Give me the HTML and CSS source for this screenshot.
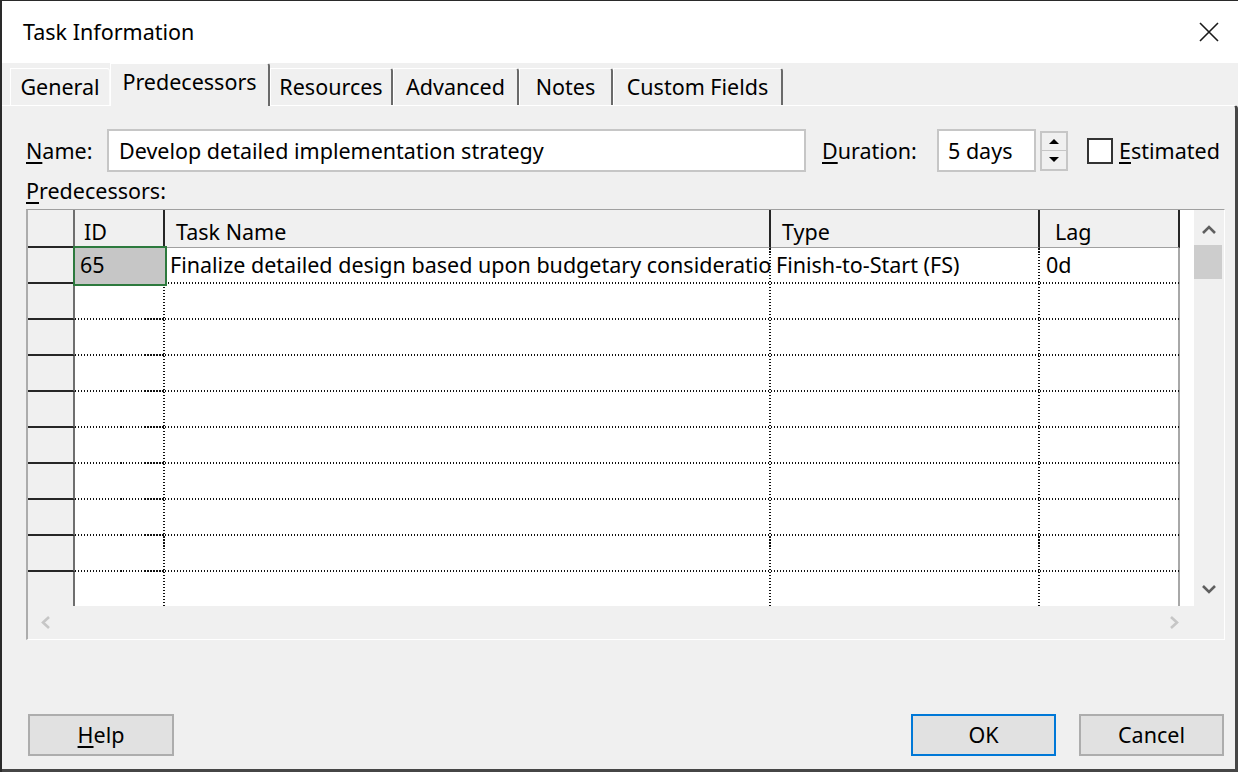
FILE: index.html
```html
<!DOCTYPE html>
<html lang="en">
<head>
<meta charset="utf-8">
<title>Task Information</title>
<link rel="stylesheet" href="styles.css">
</head>
<body>
<div class="window">
  <header class="titlebar">
    <span class="title">Task Information</span>
    <svg class="close" width="20" height="20" viewBox="0 0 20 20" aria-label="Close">
      <path d="M1 1 L19 19 M19 1 L1 19" stroke="#1a1a1a" stroke-width="1.6" fill="none"/>
    </svg>
  </header>

  <nav class="tabs">
    <div class="tab tab-general">General</div>
    <div class="tab tab-pred active">Predecessors</div>
    <div class="tab tab-res">Resources</div>
    <div class="tab tab-adv">Advanced</div>
    <div class="tab tab-notes">Notes</div>
    <div class="tab tab-custom">Custom Fields</div>
  </nav>

  <div class="panel">
    <section class="page">
      <div class="name-row">
        <span class="lbl lbl-name"><u>N</u>ame:</span>
        <div class="field field-name">Develop detailed implementation strategy</div>
        <span class="lbl lbl-dur"><u>D</u>uration:</span>
        <div class="field field-dur">5 days</div>
        <div class="spin">
          <span class="spin-btn spin-up"><i class="tri-up"></i></span>
          <span class="spin-btn"><i class="tri-down"></i></span>
        </div>
        <span class="check"></span>
        <span class="lbl lbl-est"><u>E</u>stimated</span>
      </div>

      <div class="pred-label"><u>P</u>redecessors:</div>

      <div class="gridbox">
        <div class="grid-main">
          <div class="sheet">
            <div class="hc rh"></div>
            <div class="hc h-id">ID</div>
            <div class="hc">Task Name</div>
            <div class="hc">Type</div>
            <div class="hc h-lag">Lag</div>

            <div class="rh"></div>
            <div class="c sel">65</div>
            <div class="c">Finalize detailed design based upon budgetary considerations</div>
            <div class="c">Finish-to-Start (FS)</div>
            <div class="c lag">0d</div>

            <div class="rh"></div><div class="c"></div><div class="c"></div><div class="c"></div><div class="c lag"></div>
            <div class="rh"></div><div class="c"></div><div class="c"></div><div class="c"></div><div class="c lag"></div>
            <div class="rh"></div><div class="c"></div><div class="c"></div><div class="c"></div><div class="c lag"></div>
            <div class="rh"></div><div class="c"></div><div class="c"></div><div class="c"></div><div class="c lag"></div>
            <div class="rh"></div><div class="c"></div><div class="c"></div><div class="c"></div><div class="c lag"></div>
            <div class="rh"></div><div class="c"></div><div class="c"></div><div class="c"></div><div class="c lag"></div>
            <div class="rh"></div><div class="c"></div><div class="c"></div><div class="c"></div><div class="c lag"></div>
            <div class="rh"></div><div class="c"></div><div class="c"></div><div class="c"></div><div class="c lag"></div>
            <div class="rh"></div><div class="c"></div><div class="c"></div><div class="c"></div><div class="c lag"></div>
          </div>
          <div class="vscroll">
            <div class="vs-arrow vs-up">
              <svg width="16" height="12" viewBox="0 0 16 12"><path d="M2 10 L8 4 L14 10" fill="none" stroke="#5f5f5f" stroke-width="2.6"/></svg>
            </div>
            <div class="vs-thumb"></div>
            <div class="vs-track"></div>
            <div class="vs-arrow vs-down">
              <svg width="16" height="12" viewBox="0 0 16 12"><path d="M2 2 L8 8 L14 2" fill="none" stroke="#5f5f5f" stroke-width="2.6"/></svg>
            </div>
          </div>
        </div>
        <div class="hscroll">
          <svg width="13" height="15" viewBox="0 0 13 15"><path d="M10 2 L4 7.5 L10 13" fill="none" stroke="#c6c6c6" stroke-width="2.6"/></svg>
          <svg width="13" height="15" viewBox="0 0 13 15"><path d="M3 2 L9 7.5 L3 13" fill="none" stroke="#c6c6c6" stroke-width="2.6"/></svg>
        </div>
      </div>
    </section>

    <footer class="buttons">
      <button class="btn btn-help"><u>H</u>elp</button>
      <span class="spacer"></span>
      <button class="btn btn-ok">OK</button>
      <button class="btn btn-cancel">Cancel</button>
    </footer>
  </div>
</div>
</body>
</html>
```

FILE: styles.css
```css
* {
  box-sizing: border-box;
}

html,
body {
  margin: 0;
  padding: 0;
}

body {
  background: #fff;
  font-family: "Noto Sans", "Segoe UI", sans-serif;
  font-size: 21.5px;
  color: #000;
}

u {
  text-decoration-thickness: 1.5px;
  text-underline-offset: 3px;
}

/* window frame */
.window {
  width: 1238px;
  height: 772px;
  display: flex;
  flex-direction: column;
  background: #f0f0f0;
  border-top: 1px solid #2a2a2a;
  border-left: 2px solid #2a2a2a;
}

.titlebar {
  flex: none;
  height: 62px;
  display: flex;
  align-items: center;
  padding: 0 19px 0 21px;
  background: #fff;
}

.title {
  flex: 1;
  line-height: 28px;
}

.close {
  display: block;
}

/* tab strip */
.tabs {
  flex: none;
  height: 42px;
  display: flex;
  align-items: flex-end;
  padding-left: 8px;
}

.tab {
  height: 37px;
  padding-top: 4px;
  line-height: 28px;
  text-align: center;
  white-space: nowrap;
  background: #f0f0f0;
  border-top: 1px solid #fff;
  border-left: 1px solid #fff;
  border-right: 2px solid #6a6a6a;
  border-top-right-radius: 3px;
}

.tab.active {
  height: 43px;
  margin-bottom: -1px;
  position: relative;
  z-index: 1;
}

.tab-general {
  width: 100px;
  border-right: 1px solid #fbfbfb;
}

.tab-pred { width: 160px; }
.tab-res { width: 123px; }
.tab-adv { width: 126px; }
.tab-notes { width: 94px; }
.tab-custom { width: 170px; }

/* tab page */
.panel {
  flex: 1;
  display: flex;
  flex-direction: column;
  border-top: 1px solid #fff;
  border-right: 3px solid #464646;
  border-bottom: 3px solid #464646;
  border-top-right-radius: 4px;
}

.page {
  padding: 23px 0 0 24px;
}

.name-row {
  height: 43px;
  display: flex;
  align-items: center;
}

.lbl {
  line-height: 28px;
  white-space: nowrap;
}

.lbl-name { width: 81px; }

.lbl-dur {
  width: 115px;
  margin-left: 16px;
}

.lbl-est { margin-left: 6px; }

.field {
  height: 43px;
  padding-left: 10px;
  line-height: 39px;
  white-space: nowrap;
  overflow: hidden;
  background: #fff;
  border: 2px solid #c6c6c6;
}

.field-name { width: 699px; }

.field-dur {
  width: 99px;
  padding-left: 9px;
}

.spin {
  width: 28px;
  height: 40px;
  margin-left: 4px;
  display: flex;
  flex-direction: column;
  background: #f0f0f0;
  border: 2px solid #c6c6c6;
}

.spin-btn {
  flex: 1;
  display: flex;
  align-items: center;
  justify-content: center;
}

.spin-up {
  border-bottom: 1px solid #c6c6c6;
}

.tri-up,
.tri-down {
  width: 0;
  height: 0;
  border-left: 5px solid transparent;
  border-right: 5px solid transparent;
}

.tri-up { border-bottom: 5px solid #000; }
.tri-down { border-top: 5px solid #000; }

.check {
  width: 26px;
  height: 26px;
  margin-left: 19px;
  background: #fff;
  border: 2px solid #333;
}

.pred-label {
  height: 37px;
  padding-top: 5px;
  line-height: 28px;
}

/* predecessor sheet */
.gridbox {
  width: 1199px;
  height: 431px;
  display: flex;
  flex-direction: column;
  border-top: 1px solid #a0a0a0;
  border-left: 2px solid #acacac;
  border-right: 1px solid #fff;
  border-bottom: 1px solid #fff;
}

.grid-main {
  height: 396px;
  display: flex;
}

.sheet {
  flex: 1;
  overflow: hidden;
  background: #fff;
  display: grid;
  grid-template-columns: 47px 90px 606px 269px 140px;
  grid-template-rows: 38px;
  grid-auto-rows: 36px;
  align-content: start;
}

.hc {
  padding: 8px 0 0 11px;
  line-height: 28px;
  white-space: nowrap;
  background: #f0f0f0;
  border-right: 2px solid #262626;
  border-bottom: 1px solid #a0a0a0;
}

.hc.rh {
  border-bottom: 2px solid #262626;
}

.hc.h-id { padding-left: 9px; }
.hc.h-lag { padding-left: 15px; }

.rh {
  background: #f0f0f0;
  border-right: 2px solid #6e6e6e;
  border-bottom: 2px solid #262626;
}

.c {
  padding-left: 5px;
  line-height: 34px;
  white-space: nowrap;
  overflow: hidden;
  background:
    repeating-linear-gradient(to right, #111 0 1.5px, transparent 1.5px 3px) left bottom / 100% 2px no-repeat,
    repeating-linear-gradient(to bottom, #111 0 1.5px, transparent 1.5px 3px) right top / 2px 100% no-repeat,
    #fff;
}

.c.lag {
  padding-left: 6px;
  background:
    repeating-linear-gradient(to right, #111 0 1.5px, transparent 1.5px 3px) left bottom / 100% 2px no-repeat,
    linear-gradient(#a8a8a8, #a8a8a8) right top / 2px 100% no-repeat,
    #fff;
}

.c.sel {
  position: relative;
  z-index: 1;
  background: #c6c6c6;
  outline: 2px solid #2d7a3e;
}

/* scroll bars */
.vscroll {
  width: 30px;
  display: flex;
  flex-direction: column;
  background: #f0f0f0;
}

.vs-arrow {
  display: flex;
  align-items: center;
  justify-content: center;
}

.vs-up { height: 35px; padding-top: 2px; }

.vs-thumb {
  height: 34px;
  width: 28px;
  background: #cdcdcd;
}

.vs-track { flex: 1; }

.vs-down { height: 32px; }

.hscroll {
  flex: 1;
  display: flex;
  align-items: center;
  justify-content: space-between;
  padding: 0 43px 0 11px;
  background: #f0f0f0;
}

.hscroll svg { display: block; }

/* dialog buttons */
.buttons {
  margin-top: auto;
  display: flex;
  padding: 0 11px 13px 26px;
}

.spacer { flex: 1; }

.btn {
  width: 145px;
  height: 42px;
  padding: 0;
  font: inherit;
  line-height: 38px;
  color: #000;
  background: #e1e1e1;
  border: 2px solid #adadad;
}

.btn-help { width: 146px; }

.btn-ok { border-color: #0078d7; }

.btn-cancel { margin-left: 23px; }
```
